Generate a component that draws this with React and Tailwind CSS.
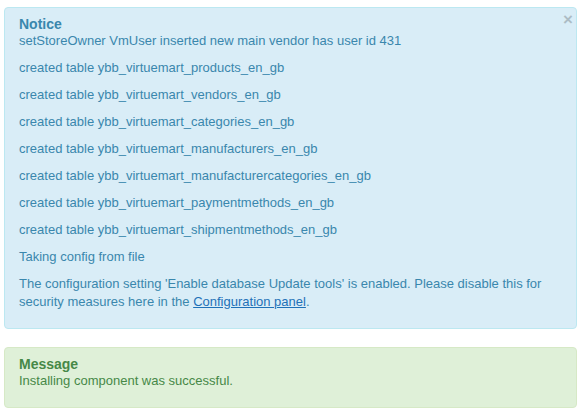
import React from 'react';

const notices = [
  'setStoreOwner VmUser inserted new main vendor has user id 431',
  'created table ybb_virtuemart_products_en_gb',
  'created table ybb_virtuemart_vendors_en_gb',
  'created table ybb_virtuemart_categories_en_gb',
  'created table ybb_virtuemart_manufacturers_en_gb',
  'created table ybb_virtuemart_manufacturercategories_en_gb',
  'created table ybb_virtuemart_paymentmethods_en_gb',
  'created table ybb_virtuemart_shipmentmethods_en_gb',
  'Taking config from file',
];

const App = () => {
  return (
    <div
      className="w-[583px] h-[413px] bg-white pt-[7px] text-[13px]"
      style={{ fontFamily: '"Liberation Sans", Arial, sans-serif' }}
    >
      {/* Notice */}
      <div className="relative ml-[4px] w-[573px] rounded-[4px] border border-[#bce8f1] bg-[#d9edf7] pt-[8px] pb-[8px] pl-[14px] pr-[28px] text-[#3a87ad]">
        <span className="absolute right-[3px] top-[2px] text-[17px] font-bold leading-[20px] text-black opacity-20">
          ×
        </span>
        <h4 className="text-[14px] font-bold leading-[16px]">Notice</h4>
        {notices.map((line, i) => (
          <p key={i} className="mb-[9px] leading-[18px]">
            {line}
          </p>
        ))}
        <p className="mb-[9px] leading-[18px]">
          The configuration setting 'Enable database Update tools' is enabled. Please disable this for
          security measures here in the{' '}
          <a href="#" className="text-[#1e71b8] underline">
            Configuration panel
          </a>
          .
        </p>
      </div>

      {/* Message */}
      <div className="mt-[18px] ml-[4px] w-[573px] rounded-[4px] border border-[#d6e9c6] bg-[#dff0d8] pt-[8px] pb-[8px] pl-[14px] pr-[35px] text-[#468847]">
        <h4 className="text-[14px] font-bold leading-[16px]">Message</h4>
        <p className="mb-[9px] leading-[18px]">Installing component was successful.</p>
      </div>
    </div>
  );
};

export default App;
